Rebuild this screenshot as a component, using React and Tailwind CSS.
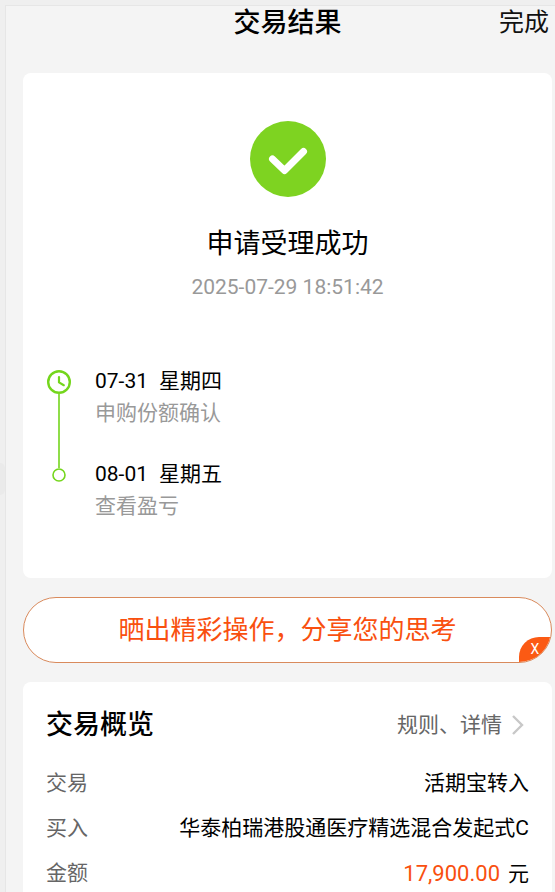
import React, { useState } from 'react';

const steps = [
    { date: '07-31', weekday: '星期四', label: '申购份额确认' },
    { date: '08-01', weekday: '星期五', label: '查看盈亏' },
];

const CheckIcon = () => (
    <svg viewBox="0 0 76 76" className="size-[76px]" aria-hidden="true">
        <circle cx="38" cy="38" r="38" fill="#7ed321" />
        <path d="M22.5 38L34.5 49.5L53.5 30.5" fill="none" stroke="#fff" strokeWidth="7" strokeLinecap="round" strokeLinejoin="round" />
    </svg>
);

const ClockIcon = () => (
    <svg viewBox="0 0 24 24" className="size-6 shrink-0" fill="none" stroke="#74d61c" aria-hidden="true">
        <circle cx="12" cy="12" r="10.8" strokeWidth="2.4" />
        <path d="M12 7V12.4L16.8 15.2" strokeWidth="2.2" strokeLinecap="round" strokeLinejoin="round" />
    </svg>
);

const DotIcon = () => (
    <svg viewBox="0 0 14 14" className="size-[14px] shrink-0" fill="none" stroke="#74d61c" aria-hidden="true">
        <circle cx="7" cy="7" r="6" strokeWidth="1.6" />
    </svg>
);

const ChevronIcon = () => (
    <svg viewBox="0 0 12 20" className="h-5 w-3" fill="none" stroke="#c8c8c8" strokeWidth="2.4" aria-hidden="true">
        <path d="M1 1L10 10L1 19" />
    </svg>
);

const StepText = ({ step }) => (
    <div className="leading-8">
        <p className="flex gap-[11px] text-black">
            <span>{step.date}</span>
            <span>{step.weekday}</span>
        </p>
        <p className="text-[#999]">{step.label}</p>
    </div>
);

const Row = ({ label, children }) => (
    <div className="flex justify-between leading-[45px]">
        <dt className="text-[#666]">{label}</dt>
        <dd className="text-black">{children}</dd>
    </div>
);

const App = () => {
    const [showBanner, setShowBanner] = useState(true);

    return (
        <div className="relative min-h-screen bg-[#efefef] pt-[5px] pl-[5px] font-[Roboto,'Noto_Sans_CJK_SC',sans-serif] text-[21px]">
            {/* Edge handle */}
            <span className="absolute top-[463px] left-0 h-8 w-[5px] rounded-r-full bg-[#eaeaea]" />

            <main className="min-h-screen border-t border-l border-[#e6e6e6] bg-[#f4f4f4] pr-[3px] pl-[17px]">
                <header className="mb-[33px] grid grid-cols-[1fr_auto_1fr] items-center leading-[34px]">
                    <h1 className="col-start-2 text-[27px] font-medium text-black">交易结果</h1>
                    <button type="button" className="justify-self-end pr-[3px] text-[25px] text-[#111]">完成</button>
                </header>

                {/* Result and timeline */}
                <section className="rounded-lg bg-white px-[23px] pt-12 pb-14">
                    <div className="flex flex-col items-center">
                        <CheckIcon />
                        <h2 className="mt-7 text-[27px] leading-[38px] text-black">申请受理成功</h2>
                        <time className="mt-[10px] leading-7 text-[#999]">2025-07-29 18:51:42</time>
                    </div>

                    <ol className="mt-16">
                        <li className="flex gap-[23px]">
                            <div className="flex w-[26px] flex-col items-center pt-[5px]">
                                <ClockIcon />
                                <span className="w-0.5 flex-1 bg-[#8fdd4a]" />
                            </div>
                            <div className="pb-[29px]">
                                <StepText step={steps[0]} />
                            </div>
                        </li>
                        <li className="flex gap-[23px]">
                            <div className="flex w-[26px] flex-col items-center">
                                <span className="h-[10px] w-0.5 bg-[#8fdd4a]" />
                                <DotIcon />
                            </div>
                            <StepText step={steps[1]} />
                        </li>
                    </ol>
                </section>

                {/* Share banner */}
                {showBanner && (
                    <div className="relative mt-[19px] overflow-hidden rounded-full border border-[#d98a5c] bg-white">
                        <button type="button" className="block w-full text-center text-[26px] leading-[64px] text-[#f9500f]">
                            晒出精彩操作，分享您的思考
                        </button>
                        <button
                            type="button"
                            onClick={() => setShowBanner(false)}
                            className="absolute right-0 bottom-0 h-[25px] w-8 rounded-tl-[20px] bg-[#fb5a14] text-sm leading-[25px] text-white"
                        >
                            X
                        </button>
                    </div>
                )}

                {/* Overview */}
                <section className="mt-[19px] rounded-t-lg bg-white px-[23px] pt-[25px]">
                    <div className="flex items-center justify-between leading-9">
                        <h2 className="text-[27px] font-medium text-black">交易概览</h2>
                        <a href="#rules" className="flex items-center gap-[10px] pr-[5px] text-[#666]">
                            规则、详情
                            <ChevronIcon />
                        </a>
                    </div>
                    <dl className="mt-[18px]">
                        <Row label="交易">活期宝转入</Row>
                        <Row label="买入">华泰柏瑞港股通医疗精选混合发起式C</Row>
                        <Row label="金额">
                            <span className="mr-2 text-[22px] text-[#f9500f]">17,900.00</span>元
                        </Row>
                    </dl>
                </section>
            </main>
        </div>
    );
};

export default App;
